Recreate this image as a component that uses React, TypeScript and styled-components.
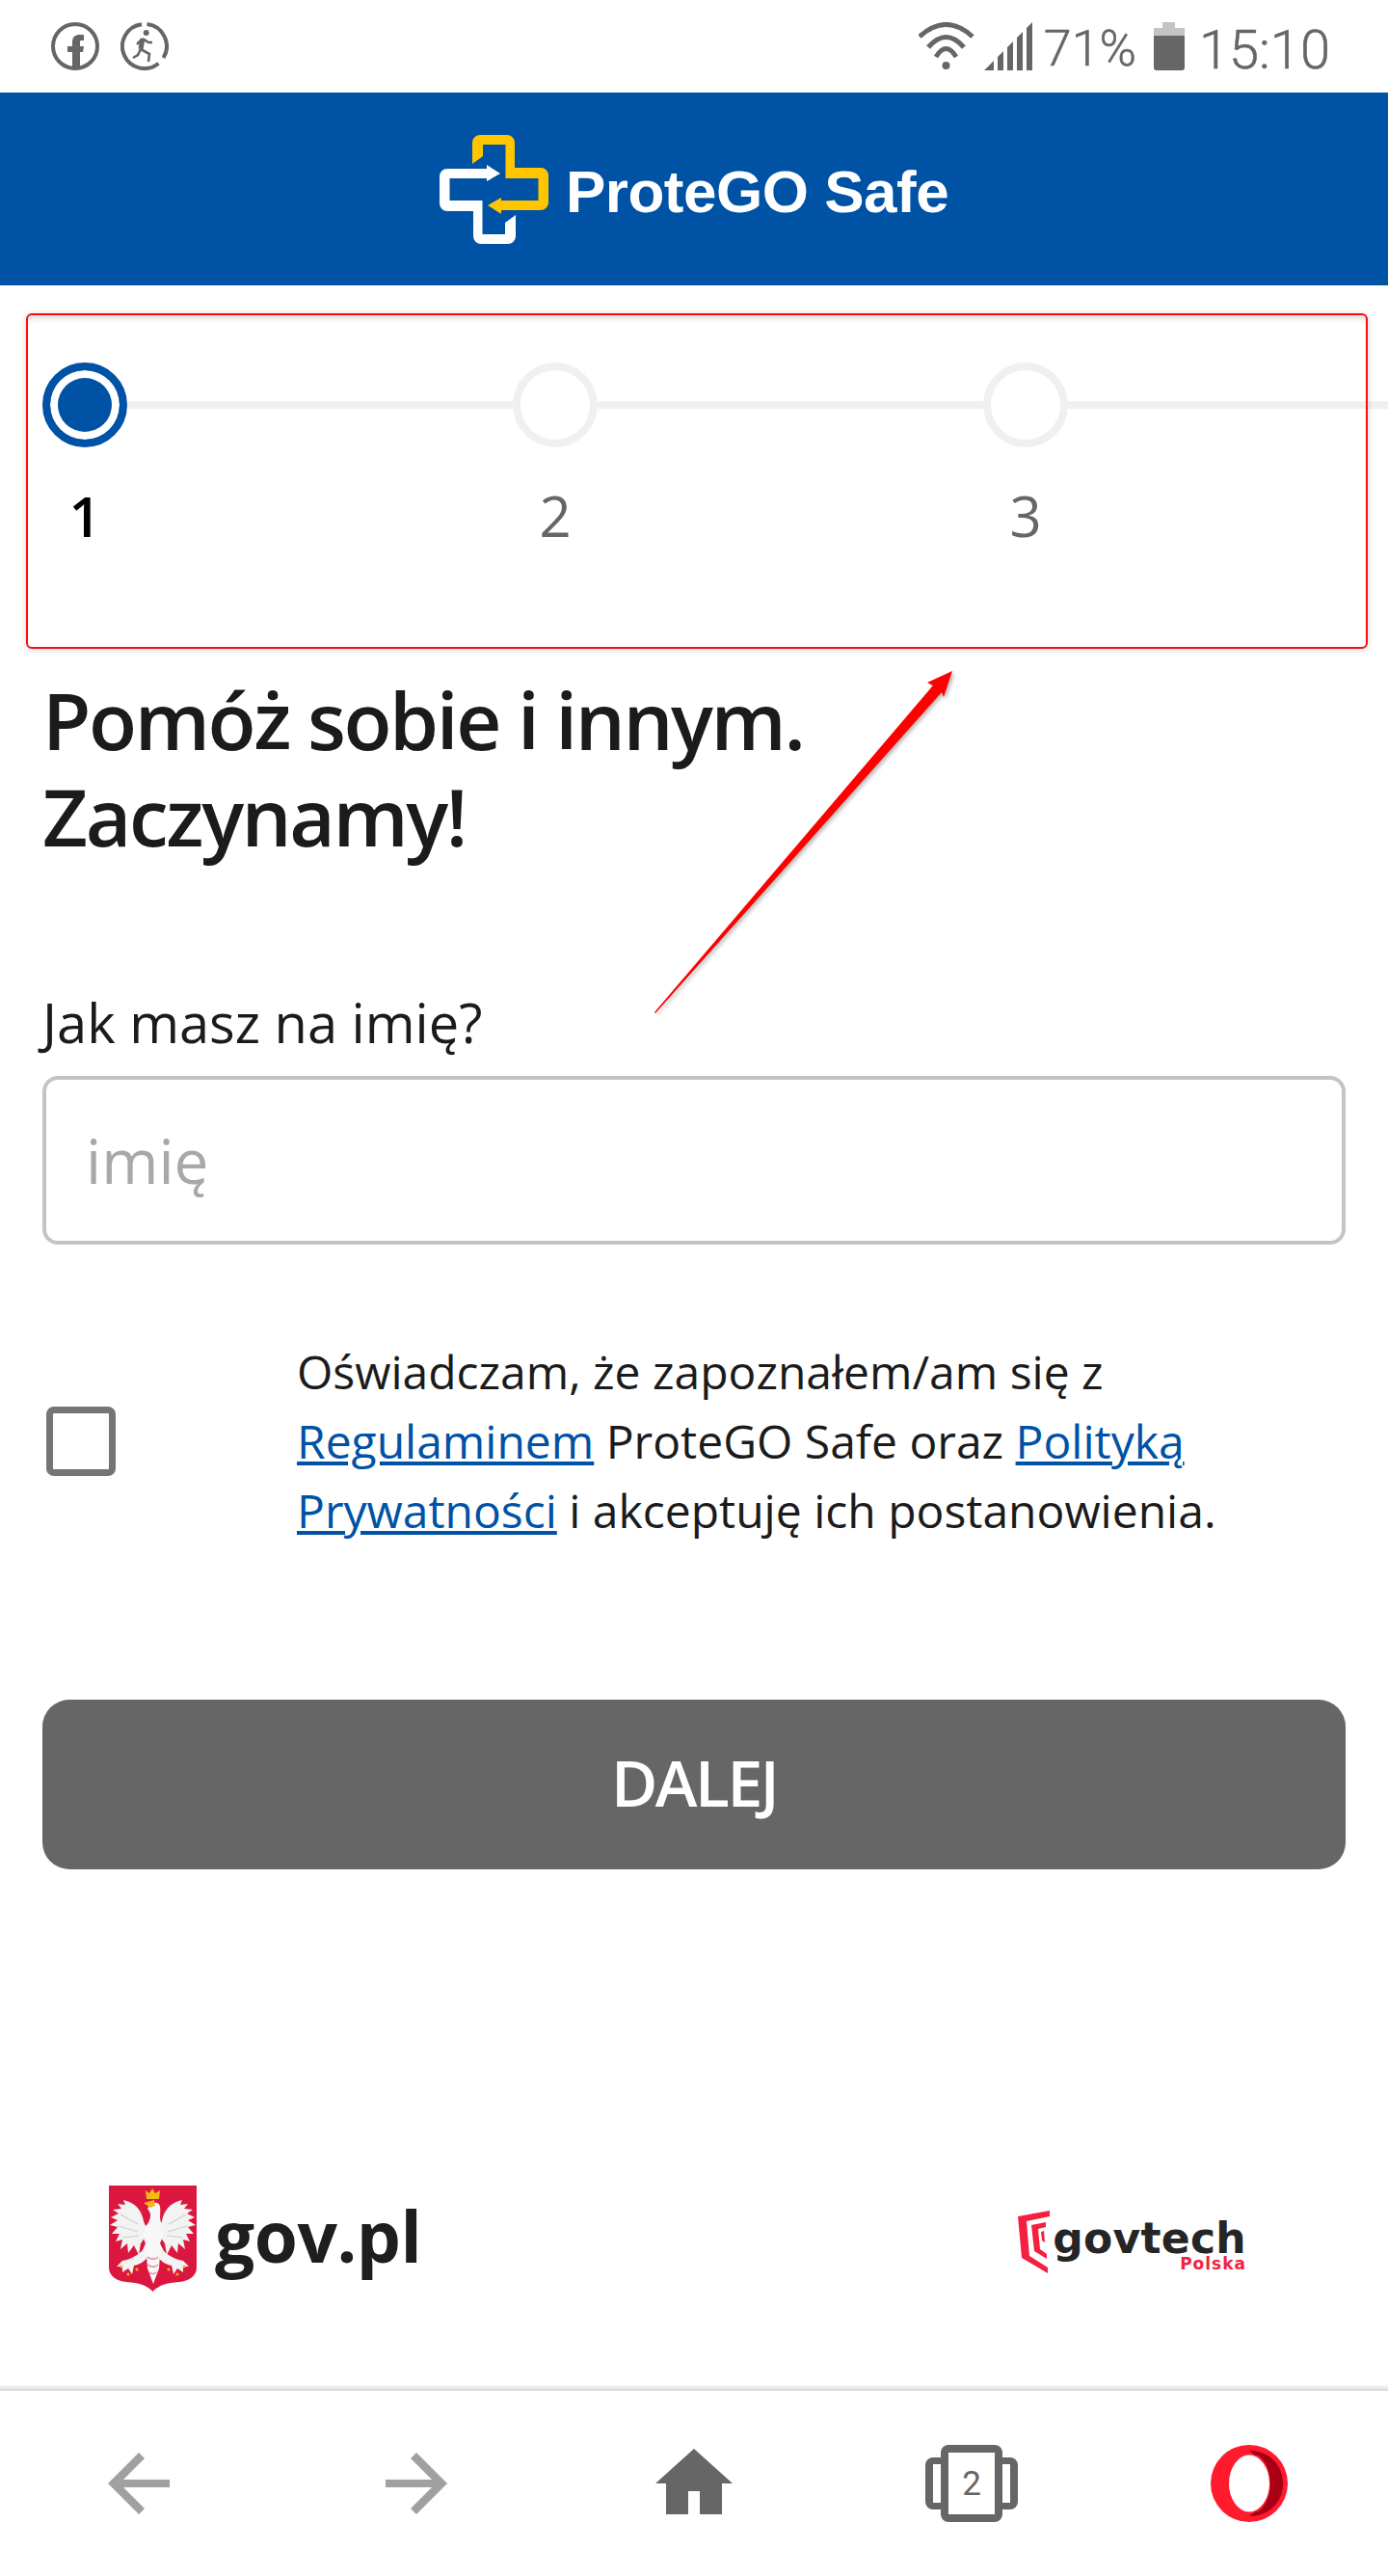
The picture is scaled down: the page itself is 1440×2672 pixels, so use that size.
import React from "react";
import styled, { createGlobalStyle } from "styled-components";

const GlobalStyle = createGlobalStyle`
  html, body {
    margin: 0;
    padding: 0;
    background: #fff;
  }
  * {
    box-sizing: border-box;
  }
`;

const Page = styled.div`
  position: relative;
  width: 1440px;
  height: 2672px;
  overflow: hidden;
  background: #fff;
  font-family: "Open Sans", "Liberation Sans", sans-serif;
  display: flex;
  flex-direction: column;
`;

const StatusBar = styled.div`
  height: 96px;
  padding: 23px 60px 0 53px;
  display: flex;
  align-items: flex-start;
  justify-content: space-between;
  color: #666;
  font-family: Roboto, sans-serif;
`;

const StatusGroup = styled.div`
  display: flex;
  align-items: flex-start;
  gap: 22px;
`;

const StatusRight = styled.div`
  display: flex;
  align-items: flex-start;
`;

const StatusText = styled.span<{ $size: number; $left: number; $top: number }>`
  font-size: ${(p) => p.$size}px;
  line-height: 50px;
  font-weight: 300;
  margin-left: ${(p) => p.$left}px;
  margin-top: ${(p) => p.$top}px;
  -webkit-text-stroke: 0.5px #666;
`;

const StatusIcon = styled.svg<{ $left?: number }>`
  display: block;
  flex: none;
  margin-left: ${(p) => p.$left || 0}px;
`;

const Header = styled.header`
  height: 200px;
  background: #0052a5;
  display: flex;
  align-items: center;
  gap: 18px;
  padding-left: 456px;
`;

const HeaderTitle = styled.span`
  font-family: "Liberation Sans", Arial, sans-serif;
  font-weight: 700;
  font-size: 62px;
  line-height: 62px;
  letter-spacing: -0.5px;
  color: #fff;
  margin-top: 5px;
`;

const StepperSection = styled.section`
  position: relative;
  margin-top: 29px;
  height: 348px;
  padding: 51px 0 0 44px;
`;

const Highlight = styled.div`
  position: absolute;
  left: 27px;
  top: 0;
  width: 1392px;
  height: 348px;
  border: 2px solid #f50f0f;
  border-radius: 6px;
  box-shadow: 0 1px 6px rgba(0, 0, 0, 0.18), inset 0 6px 6px -3px rgba(0, 0, 0, 0.14);
`;

const Steps = styled.div`
  display: flex;
`;

const Step = styled.div<{ $last?: boolean }>`
  flex: 0 0 ${(p) => (p.$last ? 420 : 488)}px;
`;

const Track = styled.div`
  display: flex;
  align-items: center;
`;

const Circle = styled.div<{ $active?: boolean }>`
  flex: 0 0 88px;
  height: 88px;
  border-radius: 50%;
  border: 8px solid ${(p) => (p.$active ? "#0052a5" : "#f0f0f0")};
  background: ${(p) => (p.$active ? "#0052a5" : "#fff")};
  box-shadow: ${(p) => (p.$active ? "inset 0 0 0 8px #fff" : "none")};
`;

const Connector = styled.div`
  flex: 1;
  height: 8px;
  background: #f0f0f0;
`;

const StepLabel = styled.div<{ $active?: boolean }>`
  width: 88px;
  margin-top: 31px;
  text-align: center;
  font-size: 58px;
  line-height: 80px;
  font-weight: ${(p) => (p.$active ? 600 : 400)};
  color: ${(p) => (p.$active ? "#000" : "#666")};
`;

const Content = styled.main`
  padding: 23px 44px 0;
  display: flex;
  flex-direction: column;
`;

const Title = styled.h1`
  margin: 0;
  font-size: 82px;
  line-height: 100px;
  font-weight: 600;
  letter-spacing: -2.4px;
  color: #1b1b1b;
`;

const FieldLabel = styled.label`
  margin-top: 126px;
  font-size: 56px;
  line-height: 76px;
  color: #1b1b1b;
`;

const TextInput = styled.input`
  margin-top: 18px;
  height: 175px;
  padding: 0 41px;
  width: 100%;
  border: 4px solid #c4c4c4;
  border-radius: 16px;
  font-family: inherit;
  font-size: 64px;
  background: #fff;
  outline: none;
  &::placeholder {
    color: #a8a8a8;
    opacity: 1;
  }
`;

const Consent = styled.div`
  margin-top: 96px;
  display: flex;
  align-items: center;
`;

const Checkbox = styled.div`
  flex: 0 0 72px;
  height: 72px;
  margin-left: 4px;
  border: 7px solid #757575;
  border-radius: 8px;
`;

const ConsentText = styled.p`
  margin: 0 0 0 188px;
  font-size: 48px;
  line-height: 72px;
  color: #1b1b1b;
`;

const ConsentLink = styled.a`
  color: #0052a5;
  text-decoration: underline;
`;

const NextButton = styled.button`
  margin-top: 160px;
  height: 176px;
  width: 100%;
  border: 0;
  border-radius: 28px;
  padding: 0 0 6px;
  background: #666;
  color: #fff;
  font-family: inherit;
  font-size: 66px;
  font-weight: 600;
  letter-spacing: -2.5px;
`;

const Logos = styled.div`
  position: absolute;
  left: 113px;
  right: 147px;
  top: 2267px;
  display: flex;
  justify-content: space-between;
`;

const GovLogo = styled.div`
  display: flex;
  align-items: flex-start;
  gap: 19px;
`;

const GovText = styled.span`
  font-size: 73px;
  line-height: 104px;
  font-weight: 700;
  letter-spacing: -0.5px;
  color: #1e1e1e;
`;

const TechLogo = styled.div`
  margin-top: 26px;
  display: flex;
  gap: 3px;
`;

const TechWords = styled.div`
  display: flex;
  flex-direction: column;
  align-items: flex-end;
`;

const TechName = styled.span`
  font-family: "DejaVu Sans", sans-serif;
  font-weight: 700;
  font-size: 44px;
  line-height: 44px;
  letter-spacing: 0.3px;
  margin-top: 7px;
  color: #252525;
`;

const TechCountry = styled.span`
  font-family: "DejaVu Sans", sans-serif;
  font-weight: 700;
  font-size: 17px;
  line-height: 14px;
  letter-spacing: 1px;
  margin-top: -3px;
  color: #f5203f;
`;

const BottomBar = styled.nav`
  position: absolute;
  left: 0;
  right: 0;
  top: 2473px;
  height: 199px;
  background: linear-gradient(#fff 0, #d6d6d6 7px, #fff 7px);
  padding-top: 63px;
  display: flex;
  align-items: flex-start;
`;

const NavIcon = styled.svg<{ $offset: number; $top?: number }>`
  margin-left: ${(p) => p.$offset}px;
  margin-top: ${(p) => p.$top || 0}px;
  flex: none;
`;

const ArrowOverlay = styled.svg`
  position: absolute;
  left: 660px;
  top: 670px;
  pointer-events: none;
  filter: drop-shadow(2px 2px 2px rgba(0, 0, 0, 0.3));
`;

const crossArm =
  "M34 30V8a8 8 0 0 1 8-8h28a8 8 0 0 1 8 8v26h27a8 8 0 0 1 8 8v28a8 8 0 0 1-8 8H64v4L50 73l14-8v3h38.5V45H68.5V10H45v12z";

const wing =
  "M36 37C34 25 26 17 15 15l2 5-8-1 4 5-9 1 6 4-8 4 7 3-8 5 8 2-6 7h8l-4 8 7-2-2 10 7-6 1 10 6-8 5 10 2-12 7-10-2-8z";

const leg =
  "M36 66c-6 6-12 10-22 12l-6 6h6v6l6-4 4 6 2-9c6-1 12-5 14-9z";

const App = () => {
  return (
    <Page>
      <GlobalStyle />
      <StatusBar>
        <StatusGroup>
          <StatusIcon width="50" height="50" viewBox="0 0 50 50">
            <circle cx="25" cy="25" r="23" fill="none" stroke="#666" strokeWidth="4" />
            <path d="M22 47V31h-5v-6h5v-4c0-6 3-8 8-8h4v6h-3c-1 0-1 1-1 2v4h4l-1 6h-3v16z" fill="#666" />
          </StatusIcon>
          <StatusIcon width="50" height="50" viewBox="0 0 50 50">
            <path d="M27.5 2.1A23 23 0 0 1 44.5 37M39.5 42.8A23 23 0 1 1 22 2.2" fill="none" stroke="#666" strokeWidth="4" />
            <circle cx="26.7" cy="11" r="3" fill="#666" />
            <path d="M23 17l-2 11" stroke="#666" strokeWidth="5" fill="none" />
            <path d="M23 17l6 4h4M22 18l-5 5M21 28l9 5-1 8M21 28l-3 6-5 3" stroke="#666" strokeWidth="2.6" fill="none" />
          </StatusIcon>
        </StatusGroup>
        <StatusRight>
          <StatusIcon width="58" height="50" viewBox="0 0 58 50">
            <path d="M1 15Q28.5-10 56 15M10 26Q28.5 5 47 26M18 36Q28.5 19 39 36" fill="none" stroke="#666" strokeWidth="5" />
            <circle cx="28.5" cy="45" r="4" fill="#666" />
          </StatusIcon>
          <StatusIcon $left={10} width="50" height="50" viewBox="0 0 50 50">
            <path d="M44 6l6-6v50h-6zM34 16l6-6v40h-6zM24 26l6-6v30h-6zM14 36l6-6v20h-6zM0 50l10-10v10z" fill="#666" />
          </StatusIcon>
          <StatusText $size={52} $left={12} $top={3}>71%</StatusText>
          <StatusIcon $left={18} width="32" height="50" viewBox="0 0 32 50">
            <path d="M9 0h13v6h10v8H0V6h9z" fill="#c4c4c4" />
            <path d="M0 14h32v33a3 3 0 0 1-3 3H3a3 3 0 0 1-3-3z" fill="#666" />
          </StatusIcon>
          <StatusText $size={56} $left={15} $top={4}>15:10</StatusText>
        </StatusRight>
      </StatusBar>

      <Header>
        <svg width="113" height="113" viewBox="0 0 113 113">
          <path d={crossArm} fill="#ffc600" />
          <path d={crossArm} fill="#fff" transform="rotate(180 56.5 56.5)" />
        </svg>
        <HeaderTitle>ProteGO Safe</HeaderTitle>
      </Header>

      <StepperSection>
        <Steps>
          <Step>
            <Track>
              <Circle $active />
              <Connector />
            </Track>
            <StepLabel $active>1</StepLabel>
          </Step>
          <Step>
            <Track>
              <Circle />
              <Connector />
            </Track>
            <StepLabel>2</StepLabel>
          </Step>
          <Step $last>
            <Track>
              <Circle />
              <Connector />
            </Track>
            <StepLabel>3</StepLabel>
          </Step>
        </Steps>
        <Highlight />
      </StepperSection>

      <Content>
        <Title>
          Pomóż sobie i innym.
          <br />
          Zaczynamy!
        </Title>
        <FieldLabel>Jak masz na imię?</FieldLabel>
        <TextInput placeholder="imię" />
        <Consent>
          <Checkbox />
          <ConsentText>
            Oświadczam, że zapoznałem/am się z
            <br />
            <ConsentLink>Regulaminem</ConsentLink> ProteGO Safe oraz <ConsentLink>Polityką</ConsentLink>
            <br />
            <ConsentLink>Prywatności</ConsentLink> i akceptuję ich postanowienia.
          </ConsentText>
        </Consent>
        <NextButton>DALEJ</NextButton>
      </Content>

      <Logos>
        <GovLogo>
          <svg width="91" height="110" viewBox="0 0 91 110">
            <path d="M0 0h91v85c0 9-8 14-18 15-13 1-21 3-27.500 10-6.500-7-14.500-9-27.500-10C8 99 0 94 0 85z" fill="#dc173f" />
            <path d={wing} fill="#f3f3f3" />
            <path d={wing} fill="#f3f3f3" transform="translate(91 0) scale(-1 1)" />
            <path d="M12 30l18 10M10 42l20 6M15 54l16-2M62 40l18-10M61 48l20-6M60 52l16 2" stroke="#cfcfcf" strokeWidth="1.2" fill="none" />
            <path d="M40 24c3-7 12-9 13-2 1 6-1 11 1 16 3 6 3 14-1 22l7 14-7-2-1 14-6 16-6-16-1-14-7 2 6-14c-4-8-3-16 2-20 3-4 4-10 2-13z" fill="#f7f7f7" />
            <path d={leg} fill="#f3f3f3" />
            <path d={leg} fill="#f3f3f3" transform="translate(91 0) scale(-1 1)" />
            <path d="M40 74c3 3 9 3 11 0M40 82c3 3 9 3 11 0M42 90c2 2 5 2 7 0" stroke="#dc173f" strokeWidth="1.3" fill="none" opacity="0.55" />
            <path d="M39 14l-1-9 4 3 3-5 3 5 5-3-1 9z" fill="#f5b914" />
            <path d="M36 18l11-3 1 6-5 2z" fill="#f5b914" />
            <g fill="#f5b914">
              <circle cx="13" cy="84" r="1.5" />
              <circle cx="20" cy="92" r="1.5" />
              <circle cx="29" cy="87" r="1.5" />
              <circle cx="78" cy="84" r="1.5" />
              <circle cx="71" cy="92" r="1.5" />
              <circle cx="62" cy="87" r="1.5" />
            </g>
          </svg>
          <GovText>gov.pl</GovText>
        </GovLogo>
        <TechLogo>
          <svg width="33" height="65" viewBox="0 0 33 65">
            <path d="M0 6l33-6v6L9 11l3 36 19 12v6L4 49z" fill="#f5203f" />
            <path d="M14 15l15-3v5l-8 2 2 21 7 5v5L17 42zM24 22l3-1 1 12-3-2z" fill="#f5203f" />
          </svg>
          <TechWords>
            <TechName>govtech</TechName>
            <TechCountry>Polska</TechCountry>
          </TechWords>
        </TechLogo>
      </Logos>

      <BottomBar>
        <NavIcon $offset={112} $top={8} width="64" height="64" viewBox="0 0 64 64">
          <path d="M64 28H16L38 6l-6-6L0 32l32 32 6-6-22-22h48z" fill="#a0a0a0" />
        </NavIcon>
        <NavIcon $offset={224} $top={8} width="64" height="64" viewBox="0 0 64 64">
          <path d="M0 28h48L26 6l6-6 32 32-32 32-6-6 22-22H0z" fill="#a0a0a0" />
        </NavIcon>
        <NavIcon $offset={216} $top={4} width="80" height="68" viewBox="0 0 80 68">
          <path d="M40 0l40 36H69v32H46V44H34v24H11V36H0z" fill="#666" />
        </NavIcon>
        <NavIcon $offset={200} width="96" height="80" viewBox="0 0 96 80">
          <path
            d="M16 13V8a8 8 0 0 1 8-8h48a8 8 0 0 1 8 8v5h8a8 8 0 0 1 8 8v38a8 8 0 0 1-8 8h-8v5a8 8 0 0 1-8 8H24a8 8 0 0 1-8-8v-5H8a8 8 0 0 1-8-8V21a8 8 0 0 1 8-8zM24 8v64h48V8zM8 20v40h8V20zM80 20v40h8V20z"
            fill="#666"
            fillRule="evenodd"
          />
          <text x="48" y="52" textAnchor="middle" fontSize="35" fill="#666" fontFamily="Roboto, sans-serif">2</text>
        </NavIcon>
        <NavIcon $offset={200} width="80" height="80" viewBox="0 0 80 80">
          <circle cx="40" cy="40" r="40" fill="#ff1b2d" />
          <path d="M40 6c20 0 35 14 35 34S60 74 40 74c14-4 22-18 22-34S54 10 40 6z" fill="#a70014" />
          <ellipse cx="40" cy="40" rx="21" ry="29.500" fill="#fff" />
          <path d="M40 6c10 0 20 4 26 12-5-5-12-8-18-7-2 0-5-3-8-5zM40 74c10 0 20-4 26-12-5 5-12 8-18 7-2 0-5 3-8 5z" fill="#a70014" />
        </NavIcon>
      </BottomBar>

      <ArrowOverlay width="360" height="390" viewBox="0 0 360 390">
        <path d="M19 380L308 41l-6-3 26-12-9 27-2-5L20 381z" fill="#ff0000" />
      </ArrowOverlay>
    </Page>
  );
};

export default App;
